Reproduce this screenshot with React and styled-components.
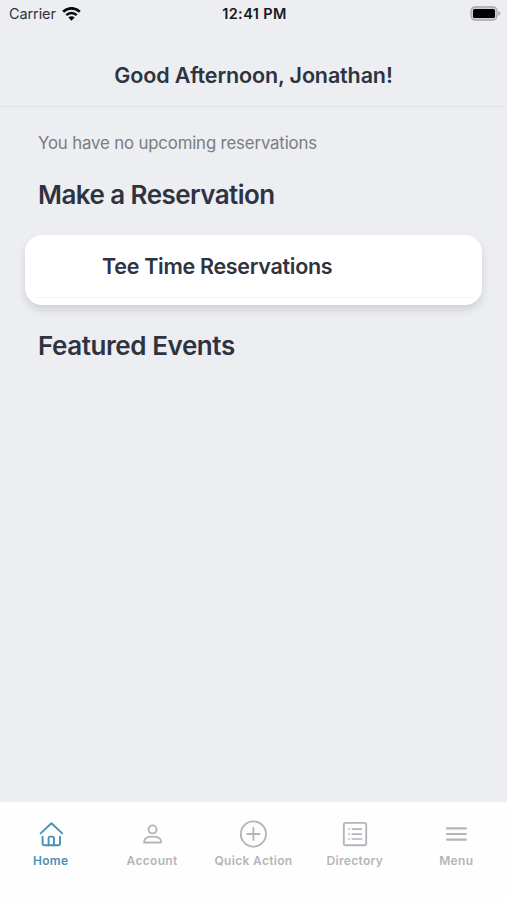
import styled, { createGlobalStyle } from "styled-components";

const tabs = [
  { label: "Home", icon: HomeIcon, active: true },
  { label: "Account", icon: AccountIcon },
  { label: "Quick Action", icon: PlusIcon },
  { label: "Directory", icon: DirectoryIcon },
  { label: "Menu", icon: MenuIcon },
];

export default function App() {
  return (
    <Screen>
      <GlobalStyle />
      <StatusBar>
        <Carrier>
          Carrier
          <WifiIcon />
        </Carrier>
        <Clock>12:41 PM</Clock>
        <BatteryIcon />
      </StatusBar>
      <Header>
        <Greeting>Good Afternoon, Jonathan!</Greeting>
      </Header>
      <Content>
        <EmptyMessage>You have no upcoming reservations</EmptyMessage>
        <SectionTitle $spacing="-0.56px">Make a Reservation</SectionTitle>
        <Card>
          <CardRow>Tee Time Reservations</CardRow>
        </Card>
        <SectionTitle $spacing="-0.42px">Featured Events</SectionTitle>
      </Content>
      <TabBar>
        {tabs.map(({ label, icon: Icon, active }) => (
          <Tab key={label} $active={active}>
            <Icon />
            <TabLabel>{label}</TabLabel>
          </Tab>
        ))}
      </TabBar>
    </Screen>
  );
}

function WifiIcon() {
  return (
    <svg width="19" height="14" viewBox="0 0 20 14" fill="none">
      <path d="M1.2 4.6a12.6 12.6 0 0 1 17.6 0" stroke="#08090b" strokeWidth="2.9" />
      <path d="M4.5 8.2a7.8 7.8 0 0 1 11 0" stroke="#08090b" strokeWidth="2.6" />
      <path d="M6.7 10.7a4.6 4.6 0 0 1 6.6 0L10 14z" fill="#08090b" />
    </svg>
  );
}

function BatteryIcon() {
  return (
    <svg width="32" height="16" viewBox="0 0 32 16">
      <rect x="1" y="1" width="26" height="13" rx="4" fill="#d0d0d3" stroke="#a7a8aa" strokeWidth="1.3" />
      <rect x="3" y="2.9" width="22" height="9.2" rx="1.6" fill="#000" />
      <path d="M28.4 5.1c2.6.9 2.6 3.9 0 4.8z" fill="#a7a8aa" />
    </svg>
  );
}

function HomeIcon() {
  return (
    <TabIcon>
      <path d="M3.6 13.4 14.4 3.3l10.8 10.1" />
      <path d="M5.6 16.8v6.6a1.8 1.8 0 0 0 1.8 1.8h13.8a1.8 1.8 0 0 0 1.8-1.8v-6.6" />
      <path d="M11.6 25.2v-7a1.6 1.6 0 0 1 1.6-1.6h2.2a1.6 1.6 0 0 1 1.6 1.6v7" />
    </TabIcon>
  );
}

function AccountIcon() {
  return (
    <TabIcon>
      <circle cx="14.6" cy="9.4" r="4" />
      <path d="M6.2 22.5v-1c0-3 3.4-4.9 8.4-4.9s8.4 1.9 8.4 4.9v1z" />
    </TabIcon>
  );
}

function PlusIcon() {
  return (
    <TabIcon>
      <circle cx="14.4" cy="14" r="12.6" />
      <path d="M8.3 14h12.2M14.4 7.9v12.2" />
    </TabIcon>
  );
}

function DirectoryIcon() {
  return (
    <TabIcon>
      <rect x="2.8" y="2.9" width="22.4" height="22.4" rx="1.8" />
      <path d="M11.2 9.1h9.4M11.2 14.1h9.4M11.2 19h9.4M7.9 9.1h.3M7.9 14.1h.3M7.9 19h.3" strokeWidth="1.6" />
    </TabIcon>
  );
}

function MenuIcon() {
  return (
    <TabIcon>
      <path d="M4.9 8.4h19M4.9 14h19M4.9 19.6h19" strokeWidth="2.1" />
    </TabIcon>
  );
}

const GlobalStyle = createGlobalStyle`
  * {
    box-sizing: border-box;
  }

  body {
    margin: 0;
    font-family: Inter, "Liberation Sans", sans-serif;
  }
`;

const Screen = styled.div`
  display: flex;
  flex-direction: column;
  height: 900px;
  background: #eceef2;
  color: #2f3341;
`;

const StatusBar = styled.div`
  display: grid;
  grid-template-columns: 1fr auto 1fr;
  align-items: center;
  height: 27px;
  padding: 0 5px 0 9px;
  font-size: 14.5px;
  color: #303236;

  > svg {
    justify-self: end;
  }
`;

const Carrier = styled.div`
  display: flex;
  align-items: center;
  gap: 6px;
  letter-spacing: -0.1px;
`;

const Clock = styled.div`
  padding-right: 2px;
  font-weight: 600;
  font-size: 14.5px;
  letter-spacing: 0.4px;
  color: #17181b;
`;

const Header = styled.header`
  display: flex;
  align-items: center;
  justify-content: center;
  height: 80px;
  padding-top: 17px;
  border-bottom: 1px solid #e1e2e5;
`;

const Greeting = styled.h1`
  margin: 0;
  font-size: 21.5px;
  font-weight: 600;
  line-height: 26px;
  letter-spacing: -0.13px;
`;

const Content = styled.main`
  flex: 1;
  padding: 25px 25px 0;
`;

const EmptyMessage = styled.p`
  margin: 0 13px;
  font-size: 16.8px;
  line-height: 22px;
  letter-spacing: -0.15px;
  color: #7b7c7f;
`;

const SectionTitle = styled.h2`
  margin: 24px 13px 23px;
  font-size: 26px;
  font-weight: 600;
  line-height: 34px;
  letter-spacing: ${(props) => props.$spacing};
`;

const Card = styled.section`
  height: 70px;
  border-radius: 17px;
  background: #fff;
  box-shadow: 0 5px 9px rgba(0, 0, 0, 0.12);
`;

const CardRow = styled.div`
  height: 63px;
  margin: 0 10px;
  padding-left: 67px;
  border-bottom: 1px solid #f3f3f4;
  font-size: 21.5px;
  font-weight: 600;
  line-height: 63px;
  letter-spacing: -0.3px;
`;

const TabBar = styled.nav`
  display: grid;
  grid-template-columns: repeat(5, 1fr);
  height: 98px;
  padding-top: 18px;
  background: #fefefe;
`;

const Tab = styled.div`
  display: flex;
  flex-direction: column;
  align-items: center;
  color: ${(props) => (props.$active ? "#4a90b5" : "#b4b5ba")};
`;

const TabIcon = styled.svg.attrs({ viewBox: "0 0 28 28" })`
  width: 28px;
  height: 28px;
  fill: none;
  stroke: currentColor;
  stroke-width: 1.9;
  stroke-linecap: round;
  stroke-linejoin: round;
`;

const TabLabel = styled.span`
  margin-top: 5px;
  font-size: 12px;
  font-weight: 600;
  line-height: 16px;
  letter-spacing: 0.32px;
  white-space: nowrap;
`;
